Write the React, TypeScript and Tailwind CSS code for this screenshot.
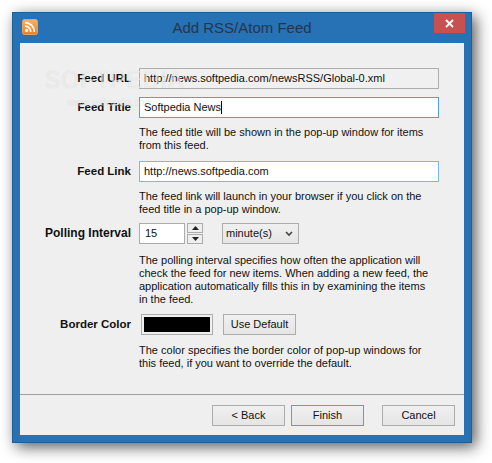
import React from "react";

const Label = ({ children, className = "text-[11.5px]" }: { children: React.ReactNode; className?: string }) => (
  <div className={`w-[99px] text-right font-bold leading-[21px] text-[#111] ${className}`}>{children}</div>
);

const Help = ({ children, className = "" }: { children: React.ReactNode; className?: string }) => (
  <p className={`ml-[107px] w-[290px] text-[11px] leading-[13px] text-[#111] ${className}`}>{children}</p>
);

const Btn = ({ children, focus = false, className = "" }: { children: React.ReactNode; focus?: boolean; className?: string }) => (
  <div
    className={`h-[21px] flex items-center justify-center text-[11px] text-[#111] border bg-gradient-to-b from-[#f0f0f0] to-[#e5e5e5] ${
      focus ? "border-[#569de5]" : "border-[#acacac]"
    } ${className}`}
  >
    {children}
  </div>
);

const RssIcon = () => (
  <svg width="16" height="16" viewBox="0 0 16 16">
    <defs>
      <linearGradient id="rssFill" x1="0" y1="0" x2="0" y2="1">
        <stop offset="0" stopColor="#fbb069" />
        <stop offset="1" stopColor="#f07f1f" />
      </linearGradient>
    </defs>
    <rect x="0.5" y="0.5" width="15" height="15" rx="2" fill="url(#rssFill)" stroke="#e8a060" />
    <circle cx="4.6" cy="11.4" r="1.6" fill="#fff" />
    <path d="M3 7.2 A5.8 5.8 0 0 1 8.8 13" fill="none" stroke="#fff" strokeWidth="1.7" />
    <path d="M3 3.6 A9.4 9.4 0 0 1 12.4 13" fill="none" stroke="#fff" strokeWidth="1.7" />
  </svg>
);

export default function App() {
  return (
    <div className="w-[492px] h-[463px] bg-white pl-[12px] pt-[12px] font-['Liberation_Sans',sans-serif]">
      <div className="relative w-[460px] h-[431px] bg-[#2672b5] border border-[#1f5f96] shadow-[4px_4px_14px_rgba(0,0,0,0.65)] flex flex-col">
        <div className="h-[30px] flex items-start shrink-0 relative">
          <div className="ml-[9px] mt-[6px]">
            <RssIcon />
          </div>
          <div className="absolute inset-x-0 top-[5px] text-center text-[15px] leading-[20px] text-[#25364a]">
            Add RSS/Atom Feed
          </div>
          <div className="absolute right-[6px] top-0 w-[31px] h-[20px] bg-[#c75050] flex items-center justify-center">
            <svg width="9" height="9" viewBox="0 0 9 9">
              <path d="M1 1 L8 8 M8 1 L1 8" stroke="#fff" strokeWidth="1.8" />
            </svg>
          </div>
        </div>
        <div className="mx-[7px] mb-[7px] flex-1 bg-[#efefef] flex flex-col">
          <div className="pl-[12px] pt-[25px] flex-1">
            <div className="flex gap-[8px] items-center">
              <Label>Feed URL</Label>
              <div className="w-[300px] h-[21px] border border-[#adadad] bg-[#f0f0f0] px-[4px] flex items-center text-[11px] text-[#111]">
                http://news.softpedia.com/newsRSS/Global-0.xml
              </div>
            </div>
            <div className="flex gap-[8px] items-center mt-[8px]">
              <Label>Feed Title</Label>
              <div className="w-[300px] h-[21px] border border-[#569de5] bg-white px-[4px] flex items-center text-[11px] text-[#111]">
                Softpedia News<span className="w-px h-[13px] bg-black" />
              </div>
            </div>
            <Help className="mt-[8px]">
              The feed title will be shown in the pop-up window for items from this feed.
            </Help>
            <div className="flex gap-[8px] items-center mt-[9px]">
              <Label>Feed Link</Label>
              <div className="w-[300px] h-[21px] border border-[#7eb4ea] bg-white px-[4px] flex items-center text-[11px] text-[#111]">
                http://news.softpedia.com
              </div>
            </div>
            <Help className="mt-[8px]">
              The feed link will launch in your browser if you click on the feed title in a pop-up window.
            </Help>
            <div className="flex gap-[8px] items-center mt-[7px]">
              <Label className="text-[12px]">Polling Interval</Label>
              <div className="flex items-center">
                <div className="w-[46px] h-[21px] border border-[#acacac] bg-white px-[5px] flex items-center text-[11px] text-[#111]">
                  15
                </div>
                <div className="ml-[2px] w-[16px] h-[21px] flex flex-col justify-between">
                  <div className="h-[10px] border border-[#acacac] bg-[#eeeeee] flex items-center justify-center">
                    <svg width="7" height="4" viewBox="0 0 7 4"><path d="M3.5 0 L7 4 L0 4 Z" fill="#222" /></svg>
                  </div>
                  <div className="h-[10px] border border-[#acacac] bg-[#eeeeee] flex items-center justify-center">
                    <svg width="7" height="4" viewBox="0 0 7 4"><path d="M0 0 L7 0 L3.5 4 Z" fill="#222" /></svg>
                  </div>
                </div>
                <div className="ml-[19px] w-[77px] h-[21px] border border-[#acacac] bg-gradient-to-b from-[#f0f0f0] to-[#e5e5e5] pl-[3px] pr-[5px] flex items-center justify-between text-[11px] text-[#111]">
                  minute(s)
                  <svg width="8" height="6" viewBox="0 0 8 6"><path d="M1 1 L4 4 L7 1" fill="none" stroke="#444" strokeWidth="1.6" /></svg>
                </div>
              </div>
            </div>
            <Help className="mt-[10px]">
              The polling interval specifies how often the application will check the feed for new items. When adding a new feed, the application automatically fills this in by examining the items in the feed.
            </Help>
            <div className="flex gap-[8px] items-center mt-[8px]">
              <Label>Border Color</Label>
              <div className="ml-[2px] w-[72px] h-[21px] border border-[#acacac] bg-[#efefef] p-[2px]">
                <div className="w-full h-full bg-black" />
              </div>
              <Btn className="ml-[2px] w-[73px]">Use Default</Btn>
            </div>
            <Help className="mt-[9px]">
              The color specifies the border color of pop-up windows for this feed, if you want to override the default.
            </Help>
          </div>
          <div className="h-px bg-[#a0a0a0]" />
          <div className="h-[40px] shrink-0 flex items-start justify-end pt-[10px] pr-[9px]">
            <Btn className="w-[73px]">&lt; Back</Btn>
            <Btn focus className="ml-[6px] w-[73px]">Finish</Btn>
            <Btn className="ml-[18px] w-[73px]">Cancel</Btn>
          </div>
        </div>
        <div className="absolute left-[32px] top-[55px] text-[23px] leading-[24px] tracking-[1px] text-white/60 [text-shadow:0_0_1px_rgba(0,0,0,0.15)] pointer-events-none">SOFTPEDIA</div>
        <div className="absolute left-[54px] top-[83px] text-[10px] leading-[14px] text-white/50 [text-shadow:0_0_1px_rgba(0,0,0,0.12)] pointer-events-none">www.softpedia.com</div>
      </div>
    </div>
  );
}
